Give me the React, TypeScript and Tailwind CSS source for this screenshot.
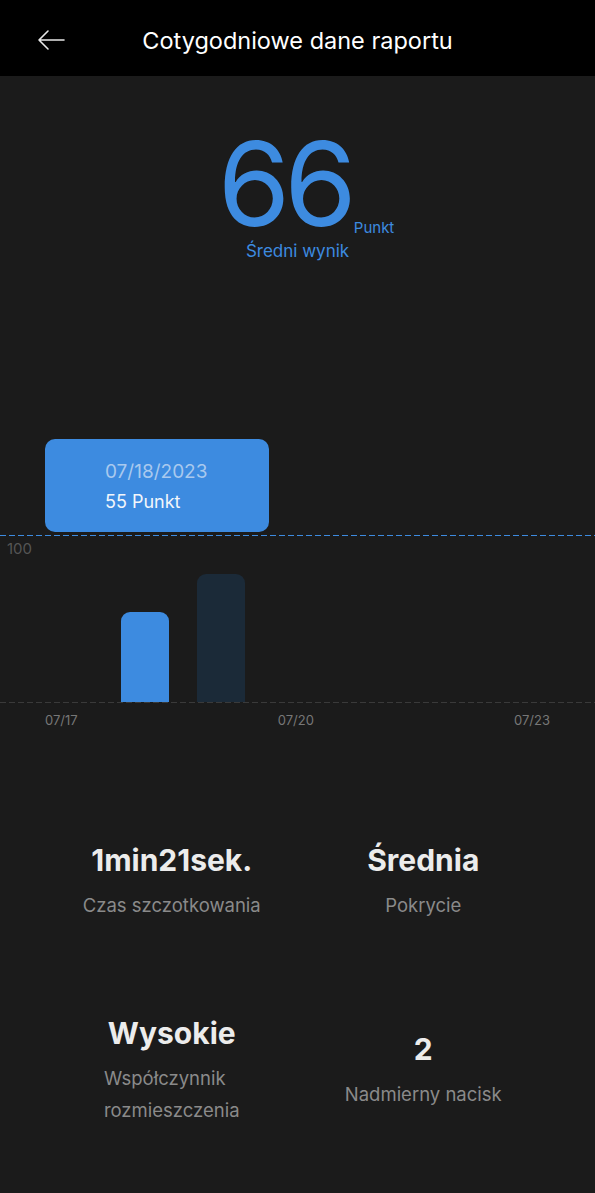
import React from "react";

const bars = [
  { h: 90, color: "bg-[#3d8be0]" },
  { h: 128, color: "bg-[#1b2a38]" },
];

function Stat({ value, label }: { value: string; label: React.ReactNode }) {
  return (
    <div className="flex flex-col items-center">
      <div className="text-[30px] font-bold leading-none text-[#ececec]">{value}</div>
      <div className="mt-[14px] text-[18.5px] leading-[32px] text-[#8a8a8a]">{label}</div>
    </div>
  );
}

export default function App() {
  return (
    <div
      className="w-[595px] h-[1193px] bg-[#1b1b1b] overflow-hidden"
      style={{ fontFamily: "Inter, 'Noto Sans', sans-serif" }}
    >
      {/* Header */}
      <header className="h-[76px] bg-black flex items-center relative">
        <button className="absolute left-[36px] top-[28px] w-[30px] h-[24px] flex items-center justify-center">
          <svg width="28" height="22" viewBox="0 0 28 22" fill="none">
            <path d="M27 11H2M11 2L2 11l9 9" stroke="#e8e8e8" strokeWidth="1.6" strokeLinecap="round" strokeLinejoin="round" />
          </svg>
        </button>
        <h1 className="w-full text-center text-[23.5px] text-white font-normal mt-[5px]">
          Cotygodniowe dane raportu
        </h1>
      </header>

      {/* Score */}
      <div className="flex flex-col items-center pt-[58px]">
        <div className="flex items-end pl-[17px]">
          <span className="text-[117px] leading-[100px] font-normal text-[#3d8be0] tracking-[-6px]">66</span>
          <span className="text-[15px] leading-none text-[#3d8be0] ml-[3px] -mb-[1px]">Punkt</span>
        </div>
        <div className="text-[17px] text-[#3d8be0] mt-[6px] leading-[22px]">Średni wynik</div>
      </div>

      {/* Tooltip */}
      <div className="mt-[177px] ml-[45px] w-[224px] h-[93px] rounded-[10px] bg-[#3d8be0] pl-[60px] pt-[21px]">
        <div className="text-[19px] leading-[24px] text-[#a9c9ee]">07/18/2023</div>
        <div className="text-[18px] leading-[24px] mt-[6px] text-[#f2f6fb]">55 Punkt</div>
      </div>

      {/* Chart */}
      <div className="mt-[3px] h-px bg-[repeating-linear-gradient(90deg,#3d8be0_0_6px,transparent_6px_9px)]" />
      <div className="text-[15px] leading-[20px] text-[#555555] pl-[7px] mt-[3px]">100</div>
      <div className="h-[143px] flex items-end gap-[28px] pl-[121px]">
        {bars.map((b, i) => (
          <div key={i} className={`w-[48px] rounded-t-[9px] ${b.color}`} style={{ height: b.h }} />
        ))}
      </div>
      <div className="h-px bg-[repeating-linear-gradient(90deg,#3a3a3a_0_6px,transparent_6px_9px)]" />
      <div className="flex justify-between px-[45px] mt-[9px] text-[13px] leading-[16px] text-[#777777]">
        <span>07/17</span>
        <span>07/20</span>
        <span>07/23</span>
      </div>

      {/* Stats */}
      <div className="grid grid-cols-2 mt-[117px] px-[46px]">
        <Stat value="1min21sek." label="Czas szczotkowania" />
        <Stat value="Średnia" label="Pokrycie" />
      </div>
      <div className="grid grid-cols-2 mt-[97px] px-[46px] items-center">
        <div className="flex flex-col items-center">
          <div className="text-[30px] font-bold leading-none text-[#ececec]">Wysokie</div>
          <div className="mt-[14px] text-[18.5px] leading-[32px] text-[#8a8a8a] text-left">
            Współczynnik
            <br />
            rozmieszczenia
          </div>
        </div>
        <div className="flex flex-col items-center">
          <div className="text-[30px] font-bold leading-none text-[#ececec]">2</div>
          <div className="mt-[14px] text-[18.5px] leading-[32px] text-[#8a8a8a]">Nadmierny nacisk</div>
        </div>
      </div>
    </div>
  );
}
